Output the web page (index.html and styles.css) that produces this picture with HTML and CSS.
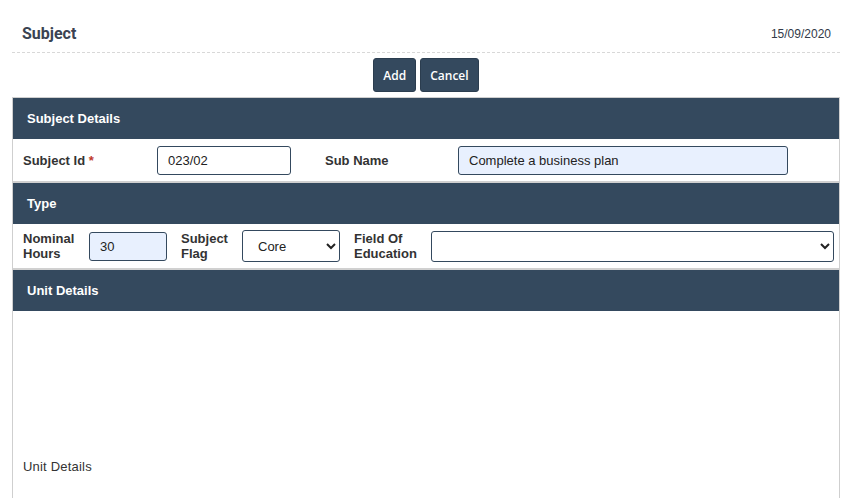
FILE: index.html
```html
<!DOCTYPE html>
<html>
<head>
<meta charset="utf-8">
<link rel="stylesheet" href="styles.css">
</head>
<body>
<div class="page">
  <div class="topbar">
    <span class="title">Subject</span>
    <span class="date">15/09/2020</span>
  </div>
  <div class="actions">
    <button class="btn">Add</button>
    <button class="btn">Cancel</button>
  </div>
  <div class="panel">
    <div class="phead">Subject Details</div>
    <div class="row row1">
      <label class="lbl w134">Subject Id <span class="req">*</span></label>
      <input class="inp w134" type="text" value="023/02">
      <label class="lbl lbl-sub">Sub Name</label>
      <input class="inp fill wide" type="text" value="Complete a business plan">
    </div>
    <div class="phead">Type</div>
    <div class="row row2">
      <label class="lbl two w66">Nominal<br>Hours</label>
      <input class="inp fill w78" type="text" value="30">
      <label class="lbl two lbl-flag">Subject<br>Flag</label>
      <select class="sel w98"><option>Core</option></select>
      <label class="lbl two lbl-field">Field Of<br>Education</label>
      <select class="sel grow"><option></option></select>
    </div>
    <div class="phead">Unit Details</div>
    <div class="pbody">
      <div class="unit-label">Unit Details</div>
    </div>
  </div>
</div>
</body>
</html>
```

FILE: styles.css
```css
html, body { margin: 0; padding: 0; background: #fff; }
body { font-family: "Liberation Sans", Arial, sans-serif; color: #333; }
.page { width: 828px; margin-left: 12px; }
.topbar {
  display: flex; justify-content: space-between; align-items: center;
  height: 53px; border-bottom: 1px dashed #d8d8d8;
  padding: 0 9px 0 10px; box-sizing: border-box;
}
.title { font-family: Roboto, "Liberation Sans", sans-serif; font-weight: 700; font-size: 16px; color: #3a4352; padding-top: 15px; }
.date { font-size: 12px; color: #333a48; padding-top: 15px; }
.actions { display: flex; justify-content: center; gap: 4px; padding-top: 5px; height: 34px; }
.btn {
  background: #34495e; color: #fff; border: 1px solid #2b3d4f; border-radius: 3px;
  font-family: "Open Sans", sans-serif; font-weight: 600; font-size: 12px;
  height: 34px; padding: 0 9px; margin: 0;
}
.panel { margin-top: 5px; border: 1px solid #cfcfcf; border-bottom: none; }
.phead {
  background: #34495e; color: #fff; font-weight: 700; font-size: 13px;
  height: 41px; line-height: 41px; padding-left: 14px;
}
.row { display: flex; align-items: center; padding-left: 10px; border-bottom: 2px solid #d0d0d0; }
.row1 { height: 42px; }
.row2 { height: 44px; }
.lbl { font-weight: 700; font-size: 13px; color: #333; }
.two { line-height: 15px; font-size: 13px; }
.req { color: #c0392b; }
.w134 { width: 134px; box-sizing: border-box; flex: none; }
.lbl-sub { width: 133px; margin-left: 34px; flex: none; }
.inp {
  height: 29px; box-sizing: border-box; border: 1px solid #34495e; border-radius: 3px;
  font-family: "Liberation Sans", Arial, sans-serif; font-size: 13px; color: #222;
  padding: 0 10px; margin: 0; background: #fff;
}
.fill { background: #e8f0fe; }
.wide { width: 330px; font-size: 13px; }
.w66 { width: 66px; flex: none; }
.w78 { width: 78px; flex: none; }
.lbl-flag { width: 61px; margin-left: 14px; flex: none; }
.sel {
  height: 32px; box-sizing: border-box; border: 1px solid #34495e; border-radius: 3px;
  font-family: "Liberation Sans", Arial, sans-serif; font-size: 13px; color: #222;
  background: #fff; padding: 0 0 0 11px; margin: 0;
}
.w98 { width: 98px; flex: none; }
.lbl-field { width: 77px; margin-left: 14px; flex: none; }
.grow { width: 403px; height: 31px; }
.pbody { height: 200px; padding-left: 10px; box-sizing: border-box; padding-top: 148px; }
.unit-label { font-size: 13px; font-weight: 400; color: #333; letter-spacing: 0.2px; }
```
